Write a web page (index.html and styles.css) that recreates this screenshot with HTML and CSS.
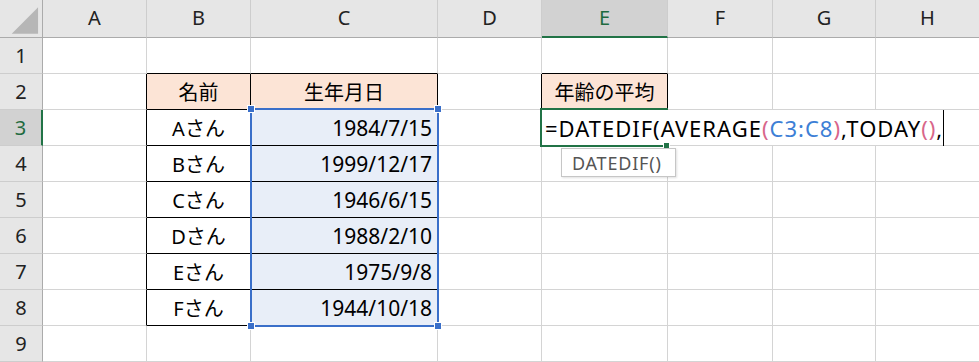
FILE: index.html
```html
<!DOCTYPE html>
<html lang="ja">
<head>
<meta charset="utf-8">
<title>Excel</title>
<link rel="stylesheet" href="styles.css">
</head>
<body>
<div class="sheet">
  <div class="hd corner"><svg class="tri" width="43" height="38" viewBox="0 0 43 38"><polygon points="12,34 39,34 39,7" fill="#b6b6b6"/></svg></div>
  <div class="hd col">A</div>
  <div class="hd col">B</div>
  <div class="hd col">C</div>
  <div class="hd col">D</div>
  <div class="hd col sel-col">E</div>
  <div class="hd col">F</div>
  <div class="hd col">G</div>
  <div class="hd col">H</div>

  <div class="hd row">1</div>
  <div class="c"></div>
  <div class="c bb"></div>
  <div class="c bb"></div>
  <div class="c"></div>
  <div class="c bb"></div>
  <div class="c"></div>
  <div class="c"></div>
  <div class="c"></div>

  <div class="hd row">2</div>
  <div class="c br"></div>
  <div class="c br bb fill center">名前</div>
  <div class="c br bb fill center">生年月日</div>
  <div class="c br"></div>
  <div class="c br bb fill center">年齢の平均</div>
  <div class="c"></div>
  <div class="c"></div>
  <div class="c"></div>

  <div class="hd row sel-row">3</div>
  <div class="c br"></div>
  <div class="c br bb center">Aさん</div>
  <div class="c br bb range right">1984/7/15</div>
  <div class="c"></div>
  <div class="c"></div>
  <div class="c"></div>
  <div class="c"></div>
  <div class="c"></div>

  <div class="hd row">4</div>
  <div class="c br"></div>
  <div class="c br bb center">Bさん</div>
  <div class="c br bb range right">1999/12/17</div>
  <div class="c"></div>
  <div class="c"></div>
  <div class="c"></div>
  <div class="c"></div>
  <div class="c"></div>

  <div class="hd row">5</div>
  <div class="c br"></div>
  <div class="c br bb center">Cさん</div>
  <div class="c br bb range right">1946/6/15</div>
  <div class="c"></div>
  <div class="c"></div>
  <div class="c"></div>
  <div class="c"></div>
  <div class="c"></div>

  <div class="hd row">6</div>
  <div class="c br"></div>
  <div class="c br bb center">Dさん</div>
  <div class="c br bb range right">1988/2/10</div>
  <div class="c"></div>
  <div class="c"></div>
  <div class="c"></div>
  <div class="c"></div>
  <div class="c"></div>

  <div class="hd row">7</div>
  <div class="c br"></div>
  <div class="c br bb center">Eさん</div>
  <div class="c br bb range right">1975/9/8</div>
  <div class="c"></div>
  <div class="c"></div>
  <div class="c"></div>
  <div class="c"></div>
  <div class="c"></div>

  <div class="hd row">8</div>
  <div class="c br"></div>
  <div class="c br bb center">Fさん</div>
  <div class="c br bb range right">1944/10/18</div>
  <div class="c"></div>
  <div class="c"></div>
  <div class="c"></div>
  <div class="c"></div>
  <div class="c"></div>

  <div class="hd row">9</div>
  <div class="c"></div>
  <div class="c"></div>
  <div class="c"></div>
  <div class="c"></div>
  <div class="c"></div>
  <div class="c"></div>
  <div class="c"></div>
  <div class="c"></div>

  <div class="ref-range">
    <span class="handle h-tl"></span>
    <span class="handle h-tr"></span>
    <span class="handle h-bl"></span>
    <span class="handle h-br"></span>
  </div>

  <div class="editor">=DATEDIF(AVERAGE<span class="p1">(</span><span class="ref">C3:C8</span><span class="p1">)</span>,TODAY<span class="p2">()</span>,<span class="caret"></span></div>
  <div class="active-cell"><span class="fill-handle"></span></div>

  <div class="tip">DATEDIF()</div>
</div>
</body>
</html>
```

FILE: styles.css
```css
html, body {
  margin: 0;
  padding: 0;
  background: #ffffff;
}

.sheet {
  position: relative;
  width: 979px;
  height: 362px;
  overflow: hidden;
  display: grid;
  grid-template-columns: 43px 104px 104px 187px 104px 126px 105px 103px 104px;
  grid-template-rows: 38px repeat(9, 36px);
  font-family: "Noto Sans", "Noto Sans CJK JP", sans-serif;
  color: #000;
}

.sheet > div {
  box-sizing: border-box;
}

.hd {
  background: #e6e6e6;
  display: flex;
  align-items: center;
  justify-content: center;
  font-family: "Noto Sans", "Open Sans", sans-serif;
  font-size: 20px;
  color: #222;
}

.corner {
  border-right: 1px solid #ababab;
  border-bottom: 1px solid #ababab;
  position: relative;
  padding: 0;
}

.tri {
  display: block;
}

.col {
  border-right: 1px solid #cdcdcd;
  border-bottom: 1px solid #ababab;
  padding-bottom: 2px;
}

.row {
  border-right: 1px solid #ababab;
  border-bottom: 1px solid #cdcdcd;
}

.sel-col {
  background: #d2d2d2;
  border-bottom: 2px solid #217346;
  color: #1f6b40;
}

.sel-row {
  background: #d2d2d2;
  border-right: 2px solid #217346;
  color: #1f6b40;
}

.c {
  border-right: 1px solid #d4d4d4;
  border-bottom: 1px solid #d4d4d4;
  display: flex;
  align-items: center;
  font-size: 20px;
  white-space: nowrap;
}

.c.br {
  border-right-color: #000;
}

.c.bb {
  border-bottom-color: #000;
}

.fill {
  background: #fce4d6;
}

.range {
  background: #e8eef8;
}

.center {
  justify-content: center;
}

.right {
  justify-content: flex-end;
  padding-right: 5px;
  font-size: 21px;
}

.ref-range {
  position: absolute;
  left: 250px;
  top: 108px;
  width: 189px;
  height: 219px;
  box-sizing: border-box;
  border: 2px solid #3a6fc9;
}

.handle {
  position: absolute;
  width: 6px;
  height: 6px;
  background: #3a6fc9;
  border: 1px solid #ffffff;
}

.h-tl { left: -5px; top: -5px; }
.h-tr { right: -5px; top: -5px; }
.h-bl { left: -5px; bottom: -5px; }
.h-br { right: -5px; bottom: -5px; }

.editor {
  position: absolute;
  left: 542px;
  top: 110px;
  width: 437px;
  height: 35px;
  background: #ffffff;
  box-sizing: border-box;
  padding-left: 3px;
  display: flex;
  align-items: center;
  font-family: "Noto Sans", "Noto Sans CJK JP", sans-serif;
  font-size: 22px;
  letter-spacing: 1px;
  white-space: nowrap;
  color: #000;
}

.p1, .p2 {
  color: #d8668a;
}

.ref {
  color: #3d7fd6;
}

.caret {
  display: inline-block;
  width: 1px;
  height: 36px;
  background: #000;
  margin-left: 0;
}

.active-cell {
  position: absolute;
  left: 540px;
  top: 108px;
  width: 128px;
  height: 39px;
  box-sizing: border-box;
  border-top: 2px solid #217346;
  border-left: 2px solid #217346;
  border-bottom: 2px solid #217346;
}

.fill-handle {
  position: absolute;
  right: -2px;
  bottom: -4px;
  width: 5px;
  height: 5px;
  background: #217346;
  border: 1px solid #ffffff;
}

.tip {
  position: absolute;
  left: 561px;
  top: 148px;
  width: 115px;
  height: 29px;
  box-sizing: border-box;
  background: #ffffff;
  border: 1px solid #c6c6c6;
  box-shadow: 1px 1px 2px rgba(0, 0, 0, 0.12);
  font-family: "Noto Sans", "Open Sans", sans-serif;
  font-size: 18px;
  letter-spacing: 0.8px;
  color: #555555;
  padding-left: 10px;
  display: flex;
  align-items: center;
}
```
